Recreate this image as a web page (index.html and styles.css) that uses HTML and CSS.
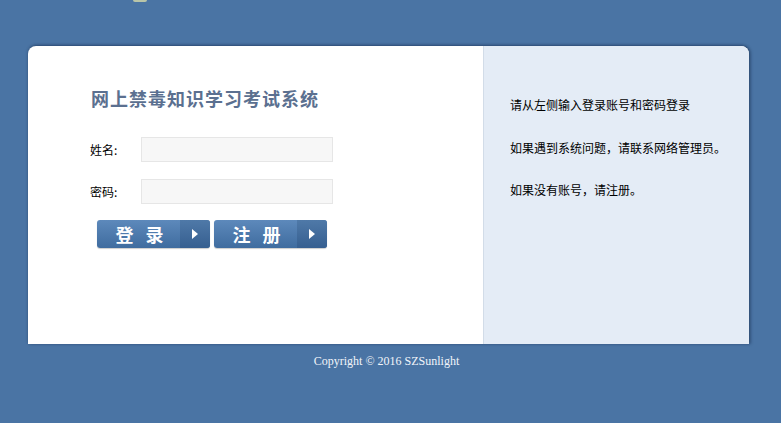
FILE: index.html
```html
<!DOCTYPE html>
<html lang="zh">
<head>
<meta charset="utf-8">
<title>网上禁毒知识学习考试系统</title>
<link rel="stylesheet" href="styles.css">
</head>
<body>
<div class="topmark"></div>
<div class="page">
  <div class="card">
    <div class="left">
      <h1 class="title">网上禁毒知识学习考试系统</h1>
      <div class="row">
        <label class="label">姓名:</label>
        <input class="field" type="text">
      </div>
      <div class="row">
        <label class="label">密码:</label>
        <input class="field" type="password">
      </div>
      <div class="buttons">
        <button class="btn"><span class="btn-text">登 录</span><span class="btn-arrow"><svg width="8" height="12" viewBox="0 0 8 12"><path d="M1 1 L7 6 L1 11 Z" fill="#fff"/></svg></span></button>
        <button class="btn"><span class="btn-text">注 册</span><span class="btn-arrow"><svg width="8" height="12" viewBox="0 0 8 12"><path d="M1 1 L7 6 L1 11 Z" fill="#fff"/></svg></span></button>
      </div>
    </div>
    <div class="right">
      <p class="tip">请从左侧输入登录账号和密码登录</p>
      <p class="tip">如果遇到系统问题，请联系网络管理员。</p>
      <p class="tip">如果没有账号，请注册。</p>
    </div>
  </div>
  <div class="footer">Copyright © 2016 SZSunlight</div>
</div>
</body>
</html>
```
FILE: styles.css
```css
html, body {
  margin: 0;
  padding: 0;
}
body {
  background: #4a74a4;
  font-family: "Noto Sans CJK SC", "Noto Sans", sans-serif;
  height: 423px;
  overflow: hidden;
  position: relative;
}
.topmark {
  position: absolute;
  left: 133px;
  top: 0;
  width: 14px;
  height: 2px;
  border-radius: 0 0 6px 6px;
  background: #b9c5a8;
}
.page {
  padding-top: 46px;
  width: 721px;
  margin-left: 28px;
}
.card {
  display: flex;
  height: 298px;
  background: #fff;
  border-radius: 8px 8px 0 0;
  box-shadow: 0 -1px 3px rgba(20, 40, 70, 0.45), 2px 0 3px rgba(20, 40, 70, 0.35);
}
.left {
  width: 455px;
  padding-top: 40px;
  box-sizing: border-box;
}
.title {
  margin: 0 0 27px 63px;
  font-size: 18px;
  line-height: 24px;
  font-weight: bold;
  color: #5b7090;
  letter-spacing: 1px;
}
.row {
  display: flex;
  align-items: center;
  margin-left: 62px;
  margin-bottom: 17px;
}
.label {
  width: 51px;
  font-size: 12px;
  color: #000;
}
.field {
  width: 192px;
  height: 25px;
  box-sizing: border-box;
  border: 1px solid #e6e6e6;
  background: #f7f7f7;
  margin: 0;
  padding: 0 4px;
}
.buttons {
  display: flex;
  gap: 4px;
  margin-left: 69px;
  margin-top: -1px;
}
.btn {
  display: flex;
  width: 113px;
  height: 28px;
  padding: 0;
  border: none;
  border-radius: 3px;
  overflow: hidden;
  background: linear-gradient(#5d89bb, #3f6c9f);
  box-shadow: 0 1px 1px rgba(0, 0, 0, 0.2);
  cursor: pointer;
}
.btn-text {
  width: 83px;
  height: 28px;
  line-height: 28px;
  color: #fff;
  font-size: 18px;
  font-weight: bold;
  letter-spacing: 4px;
  text-indent: 6px;
  font-family: "Noto Sans CJK SC", sans-serif;
}
.btn-arrow {
  width: 30px;
  height: 28px;
  display: flex;
  align-items: center;
  justify-content: center;
  background: linear-gradient(#4f79a8, #365f90);
}
.right {
  flex: 1;
  background: #e4ecf6;
  border-left: 1px solid #d2dce8;
  border-top-right-radius: 8px;
  padding: 38px 0 0 26px;
}
.tip {
  margin: 0;
  font-size: 12px;
  line-height: 42.5px;
  color: #000;
}
.footer {
  margin-top: 9px;
  text-align: center;
  font-family: "Liberation Serif", serif;
  font-size: 12px;
  line-height: 16px;
  color: #f2f5fa;
  padding-right: 4px;
}
```
